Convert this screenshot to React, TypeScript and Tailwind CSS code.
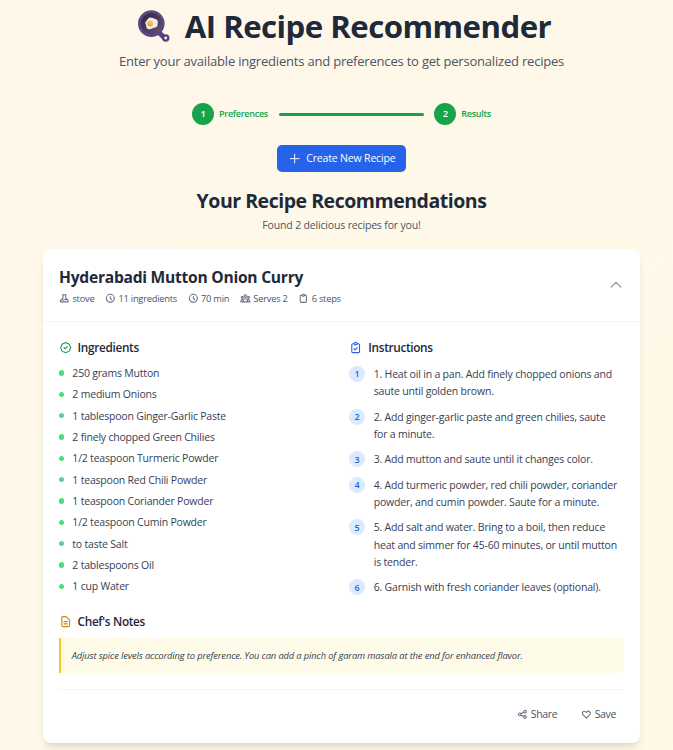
import type { ReactNode } from "react";
import {
  HiOutlineBadgeCheck,
  HiOutlineBeaker,
  HiOutlineChevronUp,
  HiOutlineClipboard,
  HiOutlineClipboardCheck,
  HiOutlineClock,
  HiOutlineDocumentText,
  HiOutlineHeart,
  HiOutlinePlus,
  HiOutlineShare,
  HiOutlineUserGroup,
} from "react-icons/hi";

const ingredients = [
  "250 grams Mutton",
  "2 medium Onions",
  "1 tablespoon Ginger-Garlic Paste",
  "2 finely chopped Green Chilies",
  "1/2 teaspoon Turmeric Powder",
  "1 teaspoon Red Chili Powder",
  "1 teaspoon Coriander Powder",
  "1/2 teaspoon Cumin Powder",
  "to taste Salt",
  "2 tablespoons Oil",
  "1 cup Water",
];

const steps = [
  ["1. Heat oil in a pan. Add finely chopped onions and", "saute until golden brown."],
  ["2. Add ginger-garlic paste and green chilies, saute", "for a minute."],
  ["3. Add mutton and saute until it changes color."],
  ["4. Add turmeric powder, red chili powder, coriander", "powder, and cumin powder. Saute for a minute."],
  ["5. Add salt and water. Bring to a boil, then reduce", "heat and simmer for 45-60 minutes, or until mutton", "is tender."],
  ["6. Garnish with fresh coriander leaves (optional)."],
];

function Pan() {
  return (
    <svg viewBox="0 0 34 32" className="h-8 w-[34px]">
      <defs>
        <linearGradient id="pan" x1="0" y1="0" x2="1" y2="1">
          <stop offset="0" stopColor="#2f2338" />
          <stop offset="1" stopColor="#66536f" />
        </linearGradient>
        <radialGradient id="yolk" cx=".6" cy=".35" r=".7">
          <stop offset="0" stopColor="#ffce3a" />
          <stop offset="1" stopColor="#f39a2c" />
        </radialGradient>
      </defs>
      <path d="M22 22.5 27 27.5" stroke="#584080" strokeWidth="5" />
      <circle cx="28.7" cy="28" r="2.6" fill="none" stroke="#584080" strokeWidth="2.3" />
      <circle cx="14.3" cy="13.6" r="13.3" fill="#5d4687" />
      <circle cx="14.6" cy="13.6" r="10.6" fill="url(#pan)" />
      <path d="M12.5 7.700c2-.5 3.200.8 5 1 2 .3 3.800 1.700 3.300 3.800-.5 1.800.2 3.400-1.300 4.600-1.500 1.200-3 .4-4.500 1.500-1.800 1-4.300.9-5.400-.9-.7-1.300-.2-2.300-1-3.600-.8-1.700.3-2.900 1.200-3.700.9-.9.9-2.300 2.700-2.700Z" fill="#f1e9f7" />
      <circle cx="13.1" cy="13.6" r="2.9" fill="url(#yolk)" />
    </svg>
  );
}

function Step({ n, label }: { n: number; label: string }) {
  return (
    <div className="flex items-center">
      <span className="flex size-[22px] items-center justify-center rounded-full bg-[#16a34a] text-[9.333px] font-semibold text-white">{n}</span>
      <span className="ml-[5px] text-[9.1px] font-semibold tracking-[-0.32px] text-[#16a34a]">{label}</span>
    </div>
  );
}

function Meta({ icon, children }: { icon: ReactNode; children: ReactNode }) {
  return (
    <span className="flex items-center gap-[2.7px]">
      {icon}
      {children}
    </span>
  );
}

function SectionTitle({ icon, children }: { icon: ReactNode; children: ReactNode }) {
  return (
    <h4 className="flex h-5 items-center gap-[5.3px] text-[11.8px] font-semibold tracking-[-0.33px] text-gray-800">
      {icon}
      {children}
    </h4>
  );
}

export default function App() {
  return (
    <div className="h-[750px] overflow-hidden bg-[linear-gradient(to_bottom_right,#fff7ea,#fefae7)] font-['Open_Sans',sans-serif]">
      <header className="flex flex-col items-center">
        <h1 className="mt-1 flex h-11 items-center gap-[14px] pl-[15px] text-[31.2px] font-bold tracking-[-0.54px] whitespace-nowrap text-gray-800">
          <Pan />
          AI Recipe Recommender
        </h1>
        <p className="mt-[3px] h-5 pl-[10px] text-[13px] leading-5 tracking-[-0.2px] whitespace-nowrap text-gray-600">
          Enter your available ingredients and preferences to get personalized recipes
        </p>
      </header>

      <div className="mt-8 flex h-[22px] items-center justify-center pl-[10px]">
        <Step n={1} label="Preferences" />
        <div className="mx-[10.700px] h-[3px] w-[145px] rounded-full bg-[#16a34a]" />
        <Step n={2} label="Results" />
      </div>

      <div className="mt-5 flex justify-center pl-[10px]">
        <button className="flex h-[27px] w-[129px] items-center gap-[5.300px] rounded-[5px] bg-[#2563eb] pt-px pl-[10.700px] text-[10.5px] tracking-[-0.17px] whitespace-nowrap text-white">
          <HiOutlinePlus className="size-[13.300px] [&_path]:[stroke-width:1.7]" />
          Create New Recipe
        </button>
      </div>

      <div className="mt-[15px] pl-[10px] text-center">
        <h2 className="h-7 text-[19.5px] leading-7 font-bold tracking-[-0.47px] text-gray-800">Your Recipe Recommendations</h2>
        <p className="mt-[2px] h-4 text-[10.5px] leading-4 tracking-[-0.165px] text-gray-600">Found 2 delicious recipes for you!</p>
      </div>

      <article className="mt-4 ml-[43px] h-[494px] w-[597px] rounded-lg bg-white shadow-[0_7px_10px_-2px_rgba(0,0,0,0.1),0_3px_4px_-3px_rgba(0,0,0,0.1)]">
        <div className="flex h-[73px] items-center justify-between border-b border-gray-100 px-4">
          <div>
            <h3 className="h-6 text-[15.6px] leading-6 font-bold tracking-[-0.25px] text-gray-800">Hyderabadi Mutton Onion Curry</h3>
            <div className="mt-[3px] flex h-[14px] items-center gap-[10.700px] text-[9.3px] tracking-[-0.24px] text-gray-600 [&_path]:[stroke-width:2.4] [&_svg]:size-[10.700px] [&_svg]:text-gray-500">
              <Meta icon={<HiOutlineBeaker />}>stove</Meta>
              <Meta icon={<HiOutlineClock />}>11 ingredients</Meta>
              <Meta icon={<HiOutlineClock />}>70 min</Meta>
              <Meta icon={<HiOutlineUserGroup />}>Serves 2</Meta>
              <Meta icon={<HiOutlineClipboard />}>6 steps</Meta>
            </div>
          </div>
          <HiOutlineChevronUp className="size-4 text-gray-400" />
        </div>

        <div className="px-4 pt-4">
          <div className="flex">
            <section className="w-[290px]">
              <SectionTitle icon={<HiOutlineBadgeCheck className="size-[13.300px] text-[#16a34a]" />}>Ingredients</SectionTitle>
              <ul className="mt-[7px] flex flex-col gap-[5.333px] text-[10.5px] leading-4 tracking-[-0.2px] text-gray-700">
                {ingredients.map((item) => (
                  <li key={item} className="flex h-4 items-center gap-2">
                    <span className="size-[5.333px] rounded-full bg-[#4ade80]" />
                    {item}
                  </li>
                ))}
              </ul>
            </section>
            <section className="flex-1">
              <SectionTitle icon={<HiOutlineClipboardCheck className="mr-[0.7px] size-[13.300px] text-[#2563eb]" />}>Instructions</SectionTitle>
              <ol className="mt-2 flex flex-col gap-2 text-[10.5px] leading-[17.333px] tracking-[-0.19px] whitespace-nowrap text-gray-700">
                {steps.map((lines, i) => (
                  <li key={i} className="flex items-start gap-[8.700px]">
                    <span className="flex size-4 items-center justify-center rounded-full bg-[#dbeafe] text-[9px] font-semibold text-[#2563eb]">{i + 1}</span>
                    <p>
                      {lines.map((line) => (
                        <span key={line} className="block">{line}</span>
                      ))}
                    </p>
                  </li>
                ))}
              </ol>
            </section>
          </div>

          <section className="mt-[15px]">
            <SectionTitle icon={<HiOutlineDocumentText className="size-[13.300px] text-[#ca8a04]" />}>Chef's Notes</SectionTitle>
            <p className="mt-[6px] flex h-[35px] items-center rounded-r-[5px] border-l-[2.667px] border-[#facc15] bg-[#fefce8] pt-px pl-[10.700px] text-[9.333px] tracking-[-0.122px] whitespace-nowrap text-gray-700 italic">
              Adjust spice levels according to preference. You can add a pinch of garam masala at the end for enhanced flavor.
            </p>
          </section>

          <footer className="mt-4 flex h-[51px] items-center justify-end gap-6 border-t border-gray-100 pr-2 text-[10.5px] tracking-[-0.35px] text-gray-600 [&_path]:[stroke-width:2.4] [&_svg]:size-[10.700px] [&_svg]:text-gray-500">
            <span className="flex items-center gap-[2.700px]"><HiOutlineShare />Share</span>
            <span className="flex items-center gap-[2.700px]"><HiOutlineHeart />Save</span>
          </footer>
        </div>
      </article>
    </div>
  );
}
